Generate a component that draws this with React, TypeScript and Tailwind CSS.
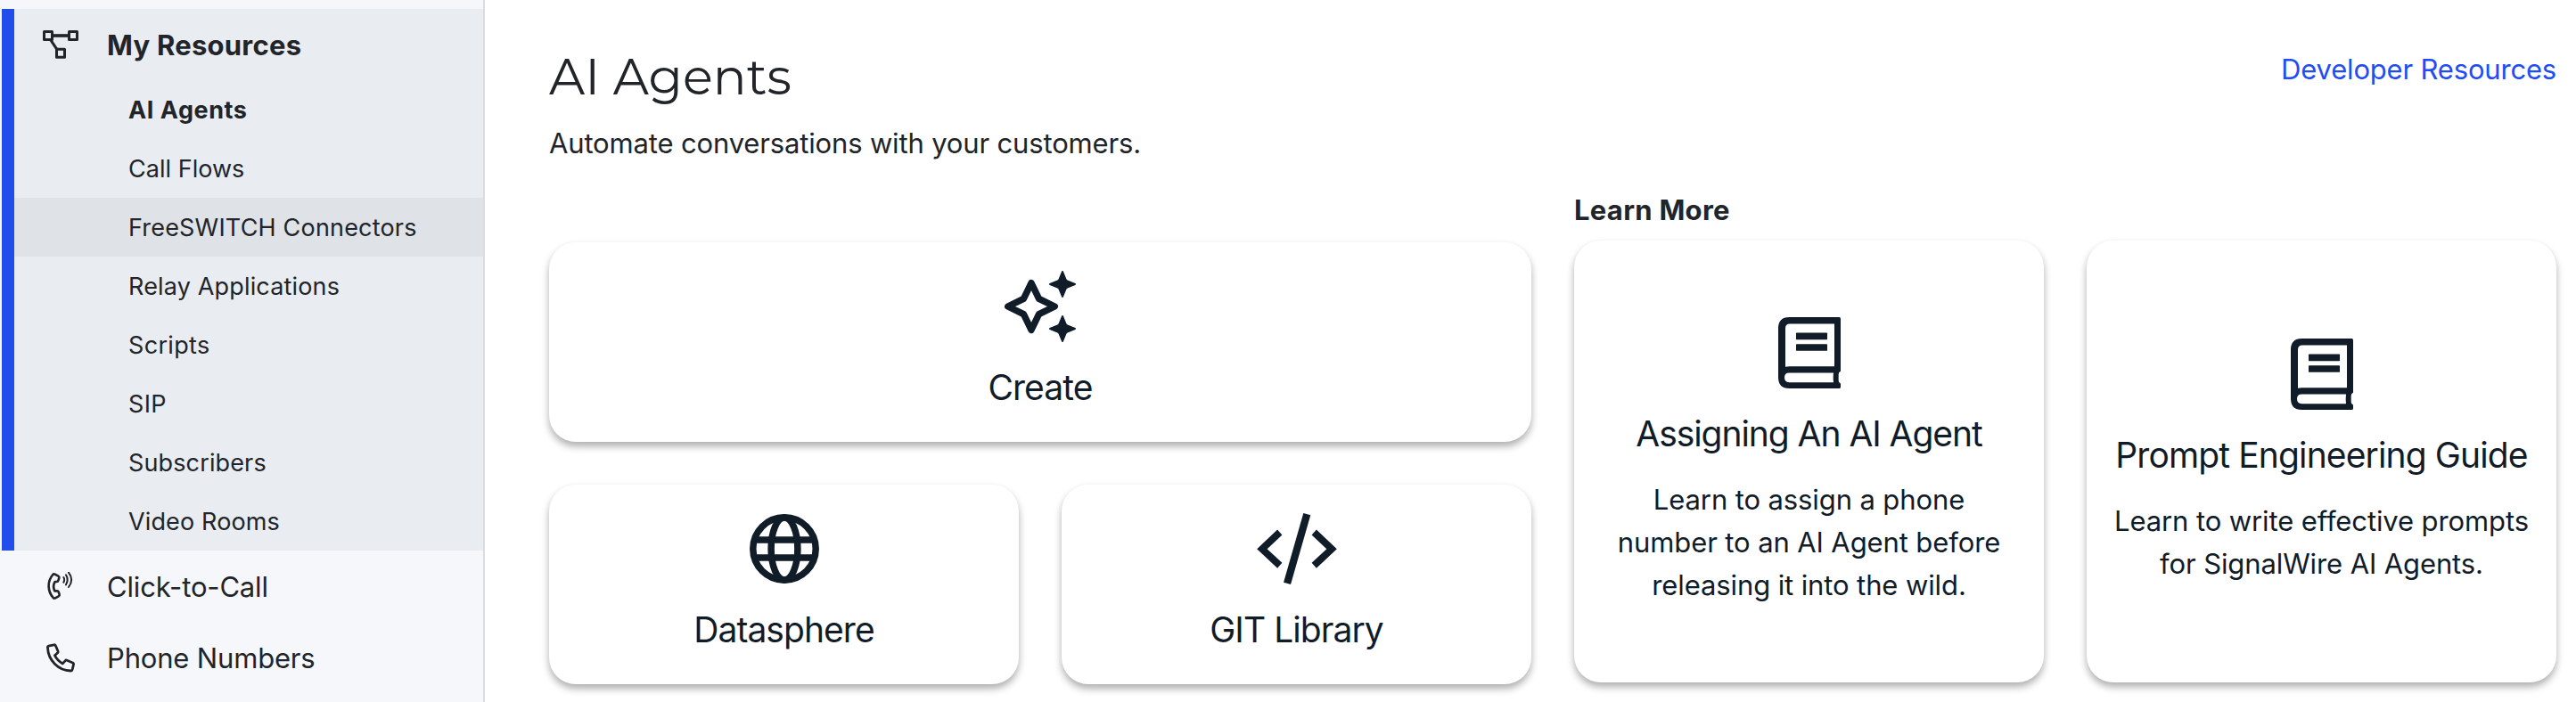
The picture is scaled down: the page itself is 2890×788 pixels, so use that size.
import type { ReactNode } from "react";

function DiagramIcon() {
  return (
    <svg className="h-8 w-10" viewBox="36 42 120 96" fill="none" stroke="currentColor" strokeWidth="9" strokeLinejoin="round">
      <path d="M68 60H124" strokeWidth="11" />
      <path d="M62 74L86 110" />
      <rect x="40.5" y="46.5" width="27" height="27" />
      <rect x="124.5" y="46.5" width="27" height="27" />
      <rect x="82.500" y="106" width="27" height="27" />
    </svg>
  );
}

function CallWaveIcon() {
  return (
    <svg className="h-8 w-[30px]" viewBox="53 39 90 96" fill="none" stroke="currentColor" strokeLinecap="round" strokeLinejoin="round">
      <path
        d="M72 48Q75 45 79 47L90 53Q94 55 93 59L90 68Q89 72 85 72H79C73 82 73 93 78 103H86Q90 103 91 106L94 115Q95 119 91 121L80 127Q76 129 73 126C54 104 52 71 72 48Z"
        strokeWidth="8"
      />
      <path d="M108 57Q113 65 108 74M116 49Q126 65 116 82M125 41Q144 65 125 90" strokeWidth="6" />
    </svg>
  );
}

function PhoneIcon() {
  return (
    <svg className="h-[33px] w-8" viewBox="47.500 275 97 99" fill="none" stroke="currentColor" strokeWidth="8.500" strokeLinejoin="round">
      <path d="M55 284L73 280Q77 279 79 283L87 302Q88 305 86 307L76 316Q85 334 103 344L112 334Q114 331 118 333L137 341Q141 343 140 347L136 364Q135 369 130 368.500C88 367 54 333 52 290Q51 285 55 284Z" />
    </svg>
  );
}

function SparklesIcon() {
  const small = "M0 -14L3.500 -5.300Q4 -4 5.300 -3.500L14 0L5.300 3.500Q4 4 3.500 5.300L0 14L-3.500 5.300Q-4 4 -5.300 3.500L-14 0L-5.300 -3.500Q-4 -4 -3.500 -5.300Z";
  return (
    <svg className="size-20" viewBox="0 0 80 80" fill="currentColor" stroke="currentColor" strokeLinejoin="round">
      <path
        d="M30 13.700L38.600 31.400L56.300 40L38.600 48.600L30 66.300L21.400 48.600L3.700 40L21.400 31.400Z"
        fill="none"
        strokeWidth="7.400"
      />
      <path d={small} transform="translate(65 15)" strokeWidth="2" />
      <path d={small} transform="translate(65 65)" strokeWidth="2" />
    </svg>
  );
}

function GlobeIcon() {
  return (
    <svg className="size-20" viewBox="0 0 80 80" fill="none" stroke="currentColor" strokeWidth="7.500">
      <circle cx="40" cy="40" r="35.200" />
      <ellipse cx="40" cy="40" rx="14.900" ry="35" />
      <path d="M8 30H72M8 50H72" />
    </svg>
  );
}

function CodeIcon() {
  return (
    <svg className="h-20 w-[90px]" viewBox="330 167 270 241" fill="currentColor">
      <path d="M330 288L399 223L415 241L364.500 288L415 335L399 353Z" />
      <path d="M600 288L531 223L515 241L565.500 288L515 335L531 353Z" />
      <path d="M487 167L511 174L444 408L420 401Z" />
    </svg>
  );
}

function BookIcon() {
  return (
    <svg className="h-20 w-[70px]" viewBox="45 47.500 210 240" fill="currentColor" fillRule="evenodd">
      <path d="M82 47.500H250Q255 47.500 255 52.500V228Q255 231 252 232Q248 234 248 241V260Q248 267 252 269Q255 270 255 273V282Q255 287.500 250 287.500H82Q45 287.500 45 250V85Q45 47.500 82 47.500ZM84 70Q69 70 69 85V215Q75 213 82 213H234V70ZM82 235Q66 235 66 251Q66 267 82 267H231Q229 251 231 235Z" />
      <rect x="105" y="100" width="105" height="23" rx="2" />
      <rect x="105" y="138" width="105" height="23" rx="2" />
    </svg>
  );
}

const resources = [
  { label: "AI Agents", style: "font-bold tracking-[0.021em]" },
  { label: "Call Flows", style: "tracking-[0.001em]" },
  { label: "FreeSWITCH Connectors", style: "bg-[#dfe2e7] tracking-[0.007em]" },
  { label: "Relay Applications", style: "tracking-[0.006em]" },
  { label: "Scripts", style: "tracking-[0.012em]" },
  { label: "SIP", style: "tracking-[0.012em]" },
  { label: "Subscribers", style: "tracking-[0.005em]" },
  { label: "Video Rooms", style: "tracking-[0.005em]" },
];

function NavItem({ icon, children }: { icon: ReactNode; children: ReactNode }) {
  return (
    <a className="flex h-20 items-center pl-12 text-[31px]">
      <span className="flex w-10 justify-center">{icon}</span>
      <span className="pt-[2px] pl-8 tracking-[-0.0055em]">{children}</span>
    </a>
  );
}

function Sidebar() {
  return (
    <aside className="w-[544px] shrink-0 border-r-2 border-[#dcdcdf] bg-[#f6f7fb] pt-[10px] pl-[2px]">
      <section className="border-l-14 border-[#214eeb] bg-[#e9ecf1]">
        <div className="flex h-20 items-center pl-8 text-[31px] font-bold">
          <DiagramIcon />
          <span className="pt-[2px] pl-8 tracking-[0.008em]">My Resources</span>
        </div>
        <nav>
          {resources.map((item) => (
            <a key={item.label} className={`flex h-[66px] items-center pt-[2px] pl-32 text-[27px] ${item.style}`}>
              {item.label}
            </a>
          ))}
        </nav>
      </section>
      <div className="-ml-[2px]">
        <NavItem icon={<CallWaveIcon />}>Click-to-Call</NavItem>
        <NavItem icon={<PhoneIcon />}>Phone Numbers</NavItem>
      </div>
    </aside>
  );
}

const card = "flex flex-col items-center rounded-[30px] bg-white text-[#111c29] shadow-[0_5px_9px_rgba(0,0,0,0.32)]";

function ActionCard({ icon, title, className = "" }: { icon: ReactNode; title: string; className?: string }) {
  return (
    <div className={`${card} h-56 pt-8 ${className}`}>
      {icon}
      <h2 className="mt-[27px] text-[39px] leading-12 tracking-[-0.024em]">{title}</h2>
    </div>
  );
}

function GuideCard({ title, titleStyle, lines }: { title: string; titleStyle: string; lines: string[] }) {
  return (
    <div className={`${card} h-[496px] justify-center`}>
      <BookIcon />
      <h2 className={`mt-[27px] text-[39px] leading-12 whitespace-nowrap ${titleStyle}`}>{title}</h2>
      <p className="mt-[26px] text-center text-[31px] leading-12 tracking-[-0.0035em] whitespace-nowrap">
        {lines.map((line) => (
          <span key={line} className="block">{line}</span>
        ))}
      </p>
    </div>
  );
}

export default function App() {
  return (
    <div className="flex h-[788px] w-[2890px] overflow-hidden bg-white font-['Inter',sans-serif] text-[#212529]">
      <Sidebar />
      <main className="grow pt-[54px] pr-[22px] pl-[72px]">
        <header className="flex items-start justify-between">
          <div>
            <h1 className="font-['Montserrat','Inter',sans-serif] text-[56px] leading-16">AI Agents</h1>
            <p className="mt-[19px] text-[31px] leading-12 tracking-[-0.005em]">
              Automate conversations with your customers.
            </p>
          </div>
          <a className="text-[31px] leading-12 tracking-[-0.006em] text-[#1f4df5]">Developer Resources</a>
        </header>
        <div className="mt-[27px] grid grid-cols-2 gap-12">
          <div className="grid grid-cols-2 content-start gap-12 pt-[60px]">
            <ActionCard className="col-span-2" icon={<SparklesIcon />} title="Create" />
            <ActionCard icon={<GlobeIcon />} title="Datasphere" />
            <ActionCard icon={<CodeIcon />} title="GIT Library" />
          </div>
          <div>
            <h3 className="text-[31px] leading-12 font-bold tracking-[0.009em]">Learn More</h3>
            <div className="mt-[10px] grid grid-cols-2 gap-12">
              <GuideCard
                title="Assigning An AI Agent"
                titleStyle="tracking-[-0.027em]"
                lines={["Learn to assign a phone", "number to an AI Agent before", "releasing it into the wild."]}
              />
              <GuideCard
                title="Prompt Engineering Guide"
                titleStyle="tracking-[-0.0225em]"
                lines={["Learn to write effective prompts", "for SignalWire AI Agents."]}
              />
            </div>
          </div>
        </div>
      </main>
    </div>
  );
}
